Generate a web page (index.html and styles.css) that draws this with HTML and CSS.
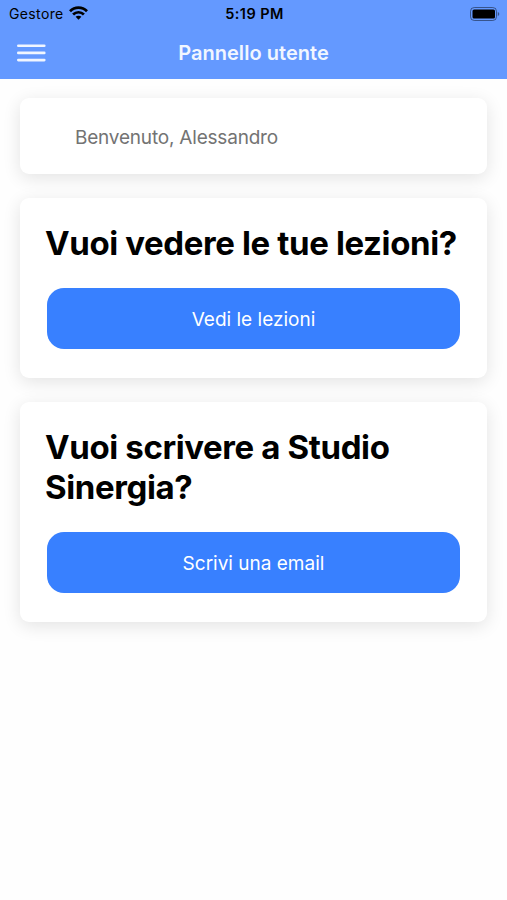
FILE: index.html
```html
<!DOCTYPE html>
<html lang="it">
<head>
<meta charset="utf-8">
<title>Pannello utente</title>
<link rel="stylesheet" href="styles.css">
</head>
<body>
<header class="header">
  <div class="status">
    <div class="carrier"><span class="carrier-name">Gestore</span>
      <svg class="wifi" width="19" height="14" viewBox="0 0 19 14" fill="none" stroke="#000" stroke-width="2.7"><path d="M1 5.200C5.800.3 13.200.3 18 5.200M4.100 8.500c3-3 7.800-3 10.800 0"/><path d="M9.500 13.700L6.600 10.800c1.600-1.500 4.200-1.500 5.800 0z" fill="#000" stroke="none"/></svg>
    </div>
    <span class="time">5:19 PM</span>
    <svg class="battery" width="30" height="14" viewBox="0 0 30 14"><rect x=".5" y=".5" width="26" height="13" rx="3.800" fill="none" stroke="#000" stroke-opacity=".45"/><rect x="2.500" y="2.500" width="22.500" height="9" rx="1.600"/><path d="M27.800 5c2 .7 2 3.300 0 4z" opacity=".45"/></svg>
  </div>
  <div class="nav">
    <svg class="menu" width="29" height="18" viewBox="0 0 29 18" stroke="#f1f6ff" stroke-width="2.6" stroke-linecap="round"><path d="M1.300 1.700h26M1.300 8.900h26M1.300 16.100h26"/></svg>
    <h1 class="title">Pannello utente</h1>
  </div>
</header>
<main class="content">
  <section class="card welcome"><span>Benvenuto, Alessandro</span></section>
  <section class="card">
    <h2>Vuoi vedere le tue lezioni?</h2>
    <button class="button">Vedi le lezioni</button>
  </section>
  <section class="card">
    <h2>Vuoi scrivere a Studio<br>Sinergia?</h2>
    <button class="button">Scrivi una email</button>
  </section>
</main>
</body>
</html>
```
FILE: styles.css
```css
* { box-sizing: border-box; }
body { margin: 0; min-height: 900px; background: #fefefe; font-family: Inter, sans-serif; color: #000; }
.header { height: 79px; background: #6499ff; }
.status { height: 27px; padding: 0 7px 0 9px; display: grid; grid-template-columns: 1fr auto 1fr; align-items: center; font-size: 14px; }
.carrier { display: flex; align-items: center; gap: 5px; }
.carrier-name { letter-spacing: .36px; }
.wifi { margin-top: -2px; }
.time { font-weight: 600; font-size: 14.5px; letter-spacing: .4px; }
.battery { justify-self: end; }
.nav { height: 52px; padding: 0 17px; display: grid; grid-template-columns: 1fr auto 1fr; align-items: center; }
.menu { display: block; }
.title { margin: 0; font-size: 20px; font-weight: 600; line-height: 24px; color: #f1f6ff; letter-spacing: .04px; }
.content { padding: 19px 20px; display: grid; gap: 24px; }
.card { padding: 25px; border-radius: 9px; background: #fff; box-shadow: 0 4px 18px rgba(0, 0, 0, .11); }
.card h2 { margin: 0 0 24px; font-size: 33px; line-height: 40.500px; font-weight: 700; letter-spacing: -.38px; white-space: nowrap; }
.welcome { height: 76px; padding: 2px 55px 0; display: flex; align-items: center; font-size: 19px; letter-spacing: -.2px; color: #737373; }
.button { display: flex; align-items: center; justify-content: center; width: 413px; height: 61px; margin: 0 2px 4px; padding: 2px 0 0; border: 0; border-radius: 17px; background: #3880ff; color: #fff; font: 400 19px Inter, sans-serif; }
```
